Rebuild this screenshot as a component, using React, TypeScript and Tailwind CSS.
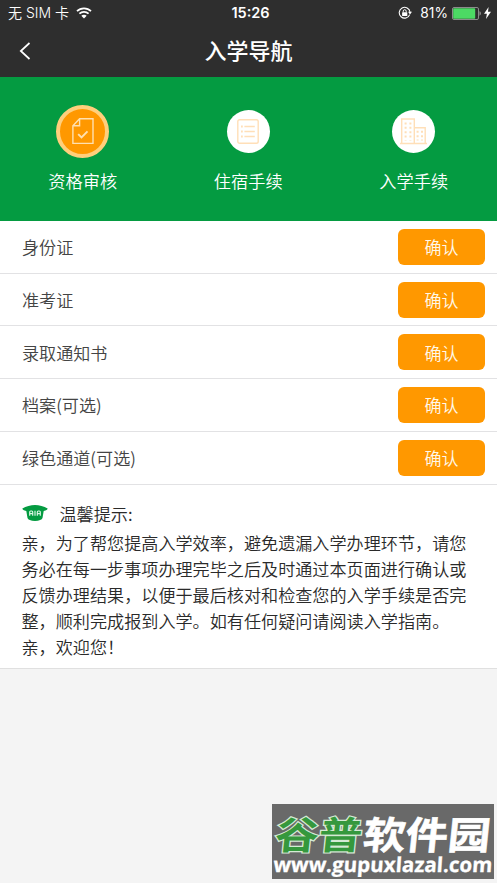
import type { ReactNode } from "react";

const items = ["身份证", "准考证", "录取通知书", "档案(可选)", "绿色通道(可选)"];

const tips = [
  "亲，为了帮您提高入学效率，避免遗漏入学办理环节，请您",
  "务必在每一步事项办理完毕之后及时通过本页面进行确认或",
  "反馈办理结果，以便于最后核对和检查您的入学手续是否完",
  "整，顺利完成报到入学。如有任何疑问请阅读入学指南。",
  "亲，欢迎您！",
];

function WifiIcon() {
  return (
    <svg width="16" height="12" viewBox="0 0 16 12" fill="none" stroke="#fff" strokeWidth="1.7">
      <path d="M1 4.2C4.8 .4 11.2 .4 15 4.2" />
      <path d="M3.4 6.7C6 4.2 10 4.2 12.6 6.7" />
      <path d="M8 11.6 5.3 8.8c1.5-1.4 3.9-1.4 5.4 0z" fill="#fff" stroke="none" />
    </svg>
  );
}

function RotationLockIcon() {
  return (
    <svg width="14" height="14" viewBox="0 0 14 14" fill="none" stroke="#fff">
      <path d="M11.7 8.6A5.4 5.4 0 1 1 12 6" strokeWidth="1.1" />
      <path d="M10 5.8h4l-2 2.6z" fill="#fff" stroke="none" />
      <rect x="4.1" y="6.2" width="5.2" height="3.8" rx=".5" fill="#fff" stroke="none" />
      <path d="M5.2 6.4V5.2a1.5 1.5 0 0 1 3 0v1.2" strokeWidth="1" />
    </svg>
  );
}

function BatteryIcon() {
  return (
    <svg width="29" height="13" viewBox="0 0 29 13" fill="none">
      <rect x=".5" y=".5" width="26" height="12" rx="1.5" stroke="#8b8b8b" />
      <rect x="1.2" y="1.2" width="22" height="10.6" rx=".8" fill="#4cd964" />
      <path d="M27.6 4.3c1.4.5 1.4 3.9 0 4.4z" fill="#bbb" />
    </svg>
  );
}

function AuditIcon() {
  return (
    <svg width="22" height="26" viewBox="0 0 22 26" fill="none" stroke="#ffe0b0" strokeWidth="1.4">
      <path d="M7.6.8H21v24.6H.9V7.8zM7.6.8v7H.9" />
      <path d="m6.2 16.2 3.3 3.3 6-6.2" strokeWidth="1.9" />
    </svg>
  );
}

function ListIcon() {
  return (
    <svg width="22" height="25" viewBox="0 0 22 25" fill="none" stroke="#ffdfb8" strokeWidth="1.4">
      <rect x=".8" y=".8" width="20.4" height="23.4" rx="1.8" />
      <path d="M7.4 7.5h10.4M7.4 12.5h10.4M7.4 17.5h10.4" />
      <path d="M4 7.5h1.8M4 12.5h1.8M4 17.5h1.8" strokeWidth="1.8" />
    </svg>
  );
}

function BuildingIcon() {
  return (
    <svg width="27" height="27" viewBox="0 0 27 27" fill="none" stroke="#ffdfb8" strokeWidth="1.4">
      <path d="M1.7 25.5V1h12.6v24.5M14.3 9.8h10.9v15.7M0 25.5h27" />
      <path d="M5.6 4.4v18M10.4 4.4v18" strokeWidth="2" strokeDasharray="2 2.4" />
      <path d="M17.6 12.8v9.6M22 12.8v9.6" strokeWidth="2" strokeDasharray="2 2.4" />
    </svg>
  );
}

function CapIcon() {
  return (
    <svg width="26" height="18" viewBox="0 0 26 18">
      <path
        d="M.4 4.6C4 2.2 8.8 1 13 1s9 1.2 12.6 3.6c.2.9-1.2 1.6-3.9 2.3l-1.2 7.1c-.5 1.8-3.3 2.9-7.5 2.9S6 15.8 5.5 14L4.3 6.9C1.6 6.2.2 5.5.4 4.6z"
        fill="#049b41"
      />
      <path
        d="M7.7 11.7V8q0-1 1-1h1q1 0 1 1v3.7M7.7 9.7h3M13 6.7v5M15.3 11.7V8q0-1 1-1h1q1 0 1 1v3.7M15.3 9.7h3"
        fill="none"
        stroke="#d9f6e3"
        strokeWidth="1.2"
      />
    </svg>
  );
}

function Step({ label, active, children }: { label: string; active?: boolean; children: ReactNode }) {
  return (
    <div className="flex w-[165.5px] flex-col items-center">
      <div className="flex h-[54px] items-center">
        <div
          className={
            active
              ? "flex size-[53px] items-center justify-center rounded-full border-[4.5px] border-[#ffcf7c] bg-[#ff9800]"
              : "flex size-[43px] items-center justify-center rounded-full bg-white"
          }
        >
          {children}
        </div>
      </div>
      <div className="mt-[10px] text-[17.2px] leading-[26px] font-[350] text-white">{label}</div>
    </div>
  );
}

export default function App() {
  return (
    <div className="flex h-[883px] w-[497px] flex-col overflow-hidden bg-[#f4f4f4] font-['Noto_Sans_CJK_SC',sans-serif]">
      <header className="h-[77px] shrink-0 bg-[#2e2e2e] text-white">
        <div className="grid h-[26px] grid-cols-3 items-center pr-[6px] pl-[8px] text-[14px] leading-[26px]">
          <div className="flex items-center gap-[7px] whitespace-nowrap">
            <span className="font-[Inter,'Noto_Sans_CJK_SC',sans-serif] text-[14px] font-[350]">无 SIM 卡</span>
            <WifiIcon />
          </div>
          <div className="pl-[2px] text-center font-[Inter,sans-serif] text-[14.5px] font-semibold">15:26</div>
          <div className="flex items-center justify-end">
            <RotationLockIcon />
            <span className="mr-[4px] ml-[8px] font-[Inter,sans-serif] text-[13.8px]">81%</span>
            <BatteryIcon />
            <svg className="ml-[3px]" width="7" height="12" viewBox="0 0 7 12" fill="#fff">
              <path d="M4.6 0 0 6.8h2.9L2 12l5-7.2H4z" />
            </svg>
          </div>
        </div>
        <div className="grid h-[50px] grid-cols-3 items-center">
          <svg className="ml-[19px]" width="12" height="18" viewBox="0 0 12 18" fill="none" stroke="#fff" strokeWidth="1.7">
            <path d="M10.5 1 1.8 9l8.7 8" />
          </svg>
          <h1 className="mb-[4px] text-center text-[22px] leading-[30px] font-medium">入学导航</h1>
        </div>
      </header>

      <nav className="flex h-[143.5px] shrink-0 bg-[#049b41] pt-[27px]">
        <Step label="资格审核" active>
          <AuditIcon />
        </Step>
        <Step label="住宿手续">
          <ListIcon />
        </Step>
        <Step label="入学手续">
          <BuildingIcon />
        </Step>
      </nav>

      <main className="shrink-0 border-b border-[#e0e0e0] bg-white">
        <ul className="pt-[0.4px]">
          {items.map((item) => (
            <li
              key={item}
              className="flex h-[52.8px] items-center justify-between border-b border-[#e2e2e4] pr-[12px] pl-[22px]"
            >
              <span className="text-[17.1px] font-[350] text-[#444]">{item}</span>
              <button
                type="button"
                className="h-[36px] w-[87px] rounded-[6px] bg-[#ff9800] text-[17px] font-[350] text-[#fff8ea]"
              >
                确认
              </button>
            </li>
          ))}
        </ul>
        <section className="h-[183px] pt-[14px] pl-[21.5px] text-[17.13px] font-[350] text-[#2a2a2a]">
          <div className="mb-[2px] flex h-[29px] items-center gap-[12px]">
            <CapIcon />
            <span>温馨提示:</span>
          </div>
          {tips.map((line) => (
            <p key={line} className="h-[26px] leading-[26px] whitespace-nowrap">
              {line}
            </p>
          ))}
        </section>
      </main>

      {/* site badge */}
      <div className="mt-auto mr-[3px] mb-[4px] h-[75px] w-[222px] self-end bg-[#696969]">
        <svg className="overflow-visible" width="222" height="75" viewBox="0 0 222 75">
          <g fontFamily="'Noto Sans CJK SC', sans-serif" fontWeight="700" fontSize="38" transform="translate(0 44.5) skewX(-6)">
            <text
              x="2"
              y="0"
              textLength="87"
              lengthAdjust="spacingAndGlyphs"
              fill="#35983d"
              stroke="#d5ead5"
              strokeWidth="2.4"
              paintOrder="stroke"
            >
              谷普
            </text>
            <text x="90" y="0" textLength="127" lengthAdjust="spacingAndGlyphs" fill="#fff" stroke="#fff" strokeWidth=".6">
              软件园
            </text>
          </g>
          <text
            x="0"
            y="0"
            transform="translate(1 68) skewX(-4)"
            textLength="219"
            lengthAdjust="spacingAndGlyphs"
            fontFamily="'Open Sans', sans-serif"
            fontWeight="700"
            fontSize="20.5"
            fill="#fff"
            stroke="#fff"
            strokeWidth=".3"
          >
            www.gupuxlazal.com
          </text>
        </svg>
      </div>
    </div>
  );
}
